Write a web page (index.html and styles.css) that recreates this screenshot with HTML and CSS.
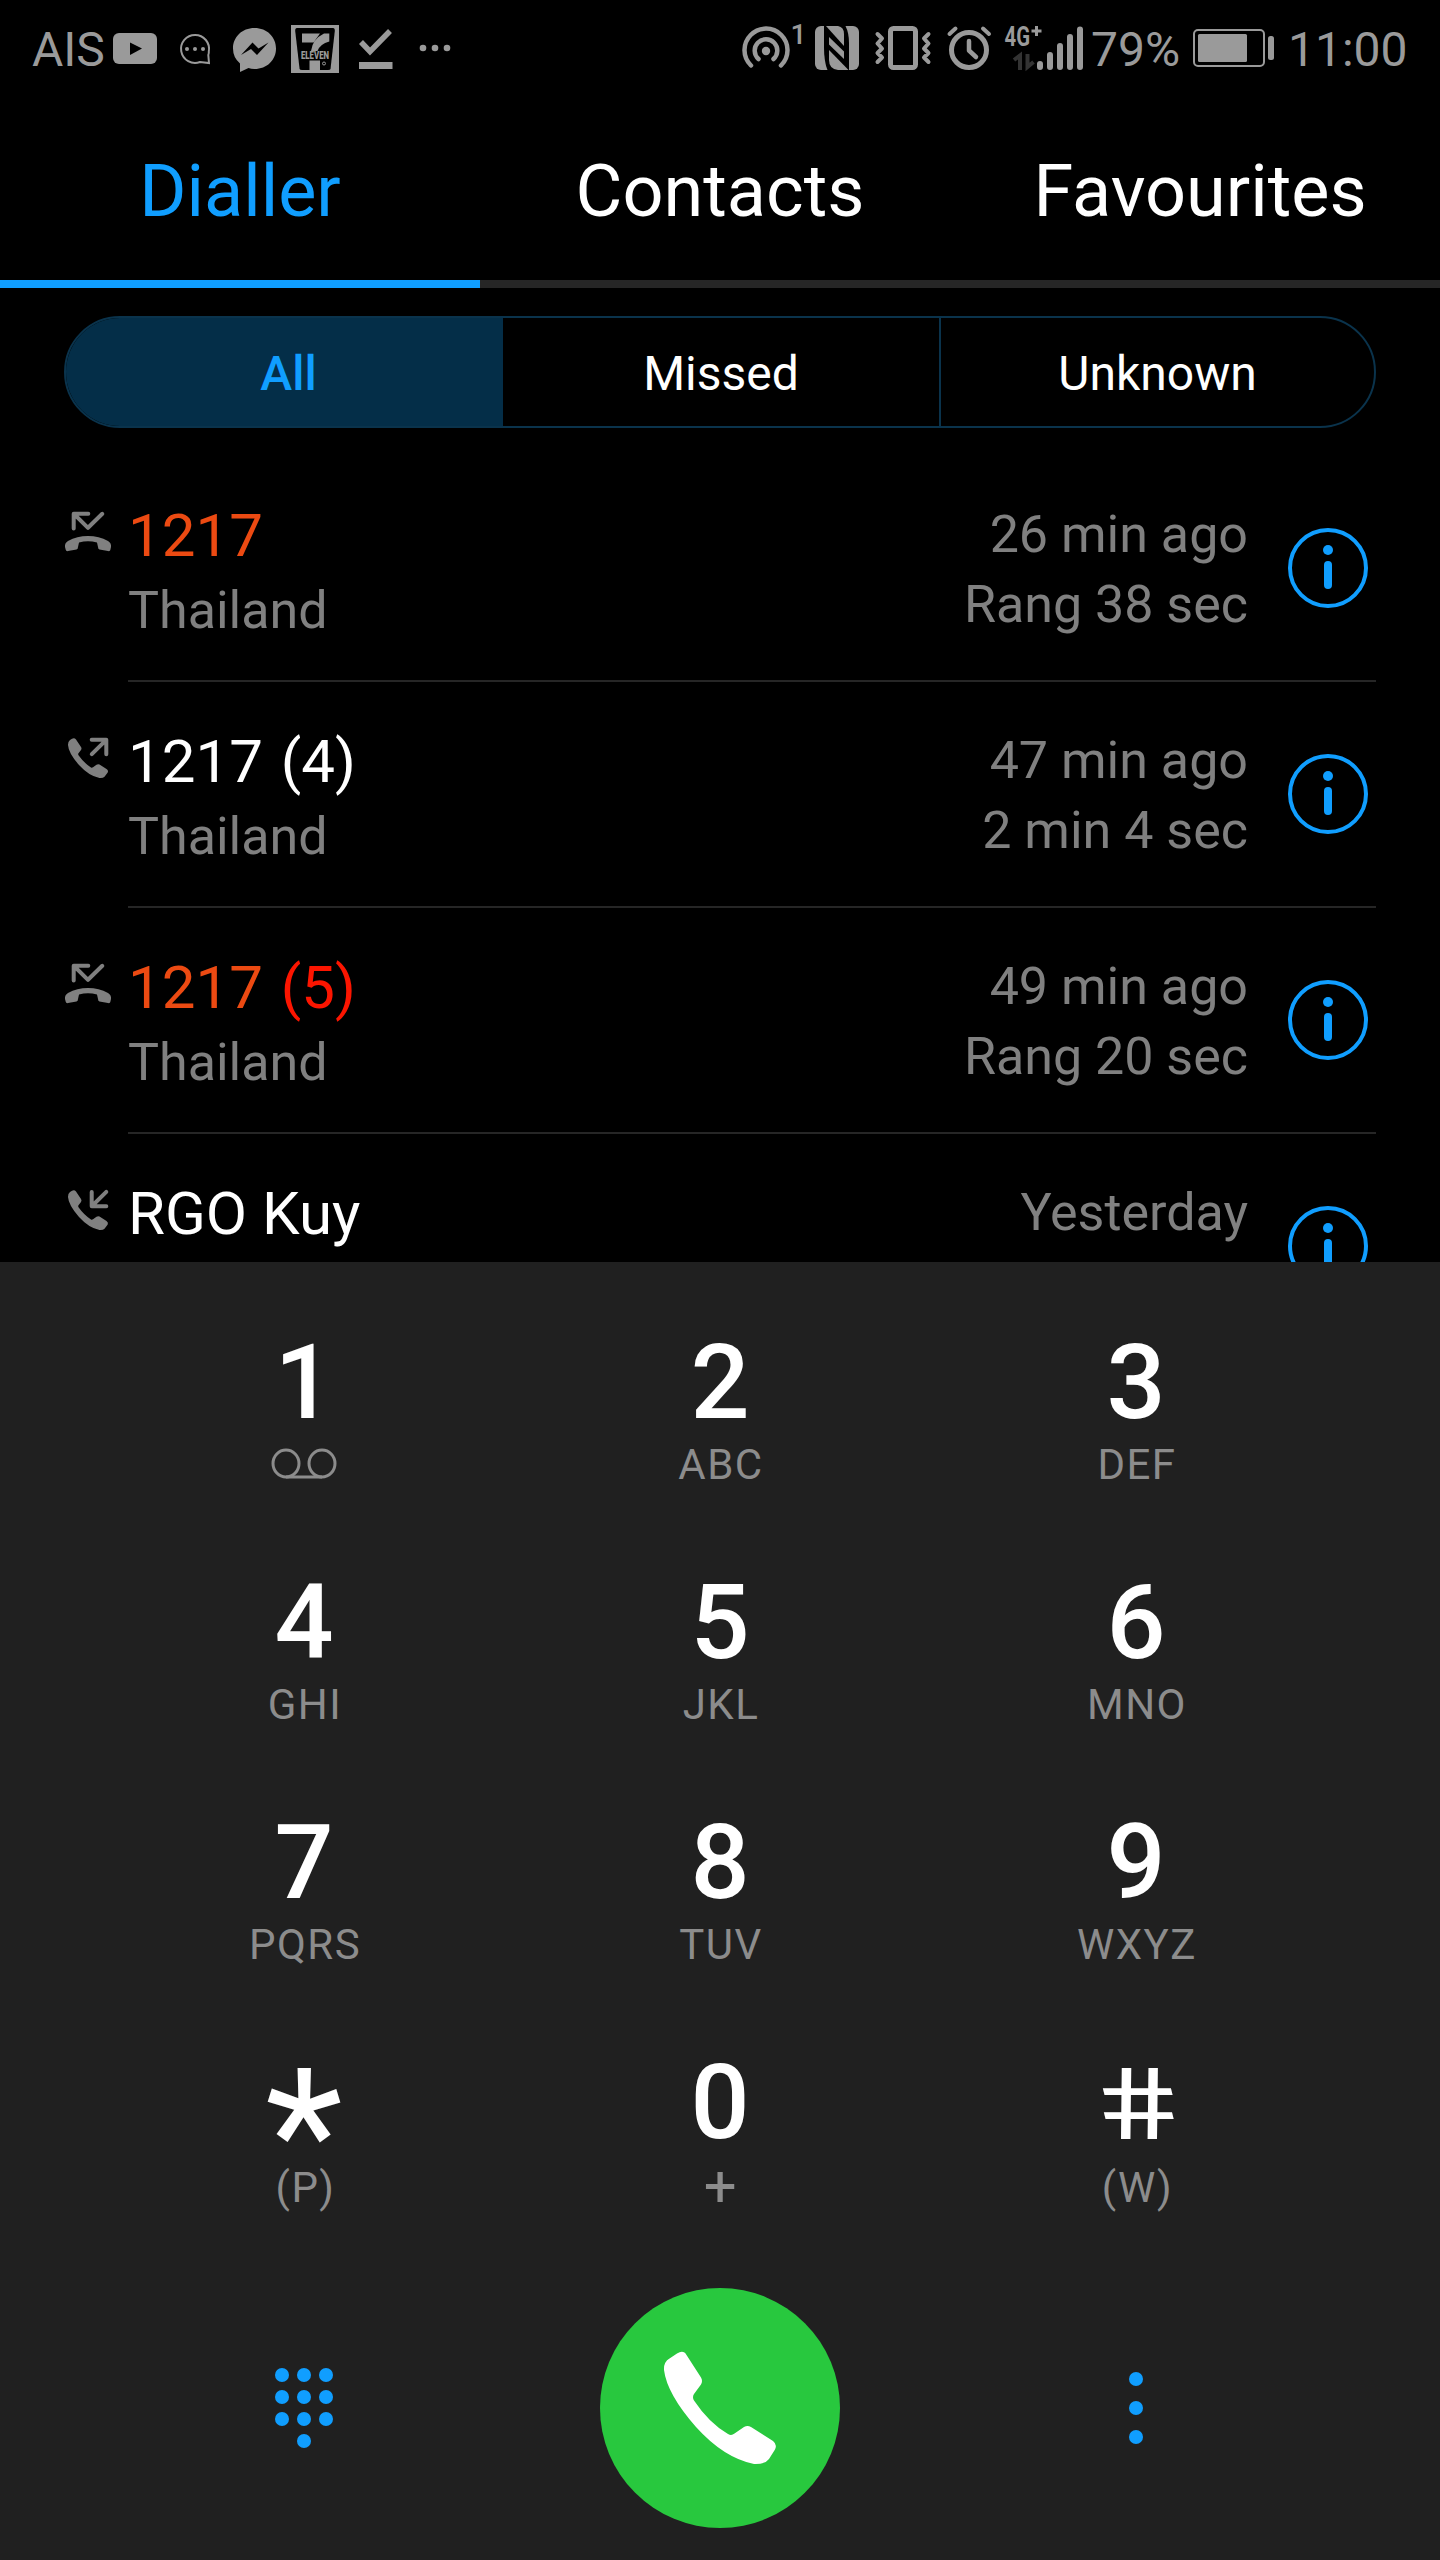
FILE: index.html
```html
<!DOCTYPE html>
<html lang="en">
<head>
    <meta charset="UTF-8">
    <meta name="viewport" content="width=device-width, initial-scale=1.0">
    <title>Dialler</title>
    <link rel="stylesheet" href="styles.css">
</head>
<body>
    <!-- Shared icons -->
    <svg class="icon-defs" width="0" height="0">
        <symbol id="icon-missed" viewBox="64 0 64 100">
            <path class="stroke" d="M88.3 57.8H73.7V72.5M74 58L88 71.8L102.3 57.8"/>
            <path d="M65 91Q64.5 87 68 85Q77 80 88 80Q99 80 108 85Q111.500 87 111 91L110.300 94Q110 95.500 108 95L99.500 93.500Q98 93 98 91L97 86.500Q88 84 79 86.500L78 91Q78 93 76.500 93.500L68 95Q66.200 95.500 65.800 94Z"/>
        </symbol>
        <symbol id="icon-handset" viewBox="64 0 64 100">
            <path d="M72 56.700Q74.500 55.500 76 57.500L81 65Q82 66.500 81 68L78.300 71.500Q78 72.500 78.500 73.300Q84 81 91 85.500Q92 86 93 85.300L96.500 82.800Q98 81.800 99.500 82.600L106.500 87Q108.700 88.500 107.700 90.500L104.500 94.800Q103 96.300 99.500 96Q89 94 79 83Q68.500 71 68 63Q67.900 59.500 70 58Z"/>
        </symbol>
        <symbol id="icon-out" viewBox="64 0 64 100">
            <use href="#icon-handset" x="64" width="64" height="100"/>
            <path class="stroke" d="M91.700 57.800H106.300V72.300M91.800 72.200L105.500 58.600"/>
        </symbol>
        <symbol id="icon-in" viewBox="64 0 64 100">
            <use href="#icon-handset" x="64" width="64" height="100"/>
            <path class="stroke" d="M91.700 58V72.300H106.300M106.300 57.800L92.500 71.500"/>
        </symbol>
        <symbol id="icon-info" viewBox="0 0 80 80">
            <circle class="ring" cx="40" cy="40" r="38"/>
            <circle cx="40" cy="22" r="5"/>
            <rect x="36" y="33" width="8" height="28" rx="4"/>
        </symbol>
    </svg>

    <div class="status-bar">
        <span class="carrier">AIS</span>
        <svg width="64" height="96" viewBox="105 0 64 96">
            <rect x="113" y="33" width="44" height="31" rx="6"/>
            <path class="cut" d="M130 42.500L142 48.500L130 55Z"/>
        </svg>
        <svg width="54" height="96" viewBox="169 0 54 96">
            <path class="line" stroke-width="2" d="M208.800 51.500A14 14 0 1 0 200 62L209 63L208.300 55Q209 53 208.800 51.500Z"/>
            <circle cx="187" cy="49" r="2"/>
            <circle cx="195" cy="49" r="2"/>
            <circle cx="203" cy="49" r="2"/>
        </svg>
        <svg width="62" height="96" viewBox="223 0 62 96">
            <path d="M254.500 28C242 28 233 37 233 48.500Q233 57.500 240 63.500V72L248.500 68Q251 69 254.500 69C267 69 276 60 276 48.500C276 37 267 28 254.500 28Z"/>
            <path class="cut" d="M241 55L252.500 42.500L258.500 48.500L268.500 42.500L257 55L251 49Z"/>
        </svg>
        <svg width="64" height="96" viewBox="285 0 64 96">
            <rect x="291" y="25" width="48" height="48"/>
            <path class="cut" d="M297 28H333Q335 28 334.800 31L330.500 69Q330.300 70 328 70H302Q300 70 299.600 69L295.200 31Q295 28 297 28Z"/>
            <path d="M302 33.500H320L313.500 42.500H302ZM329.300 33.500V41.500Q320 44 317.500 51H311Q312.500 39 324 33.500Z"/>
            <rect x="309.500" y="60.500" width="10.500" height="11"/>
            <text class="eleven" x="301" y="59.300" textLength="28" lengthAdjust="spacingAndGlyphs">ELEVEN</text>
            <circle class="line" stroke-width="1" cx="324" cy="63.500" r="1.500"/>
        </svg>
        <svg width="54" height="96" viewBox="349 0 54 96">
            <path class="line" stroke-width="5.500" d="M361 42L370 51.500L390 31"/>
            <rect x="359" y="62" width="33.500" height="7"/>
        </svg>
        <svg width="60" height="96" viewBox="403 0 60 96">
            <circle cx="423" cy="48" r="3.300"/>
            <circle cx="435" cy="48" r="3.300"/>
            <circle cx="447" cy="48" r="3.300"/>
        </svg>

        <div class="spacer"></div>

        <svg width="69" height="96" viewBox="738 0 69 96">
            <circle cx="766" cy="51" r="4.200"/>
            <path class="line round" stroke-width="4.500" d="M751 65.500A21.500 21.500 0 1 1 781 65.500M758.500 59A11.300 11.300 0 1 1 773.500 59"/>
            <text class="small-one" x="790.500" y="44">1</text>
        </svg>
        <svg width="60" height="96" viewBox="807 0 60 96">
            <rect x="815" y="26" width="44" height="44" rx="6"/>
            <path class="cut" d="M824 26H845.500Q849 33 849 43V70H827.500Q824 62 824 47Z"/>
            <path d="M826 26H838Q844 27 844 34V46Z"/>
            <path d="M829 37L844 51.500V59L829 44.500Z"/>
            <path d="M829 50L848.500 70H838Q829 69 829 60Z"/>
        </svg>
        <svg width="72" height="96" viewBox="867 0 72 96">
            <rect class="line" stroke-width="5" x="890.500" y="28.500" width="25" height="39" rx="3"/>
            <path class="line round" stroke-width="4" d="M877.500 34L882 38.500L877.500 43.500L882 48.500L877.500 53L882 57.500L877.500 62M928.500 34L924 38.500L928.500 43.500L924 48.500L928.500 53L924 57.500L928.500 62"/>
        </svg>
        <svg width="62" height="96" viewBox="939 0 62 96">
            <circle class="line" stroke-width="5" cx="969" cy="50" r="17.500"/>
            <path class="line round" stroke-width="4.500" d="M969 41V50.500L976 57"/>
            <path class="line round" stroke-width="4" d="M949.500 34L955.500 28.500M983 28.500L989 34"/>
        </svg>
        <svg width="90" height="96" viewBox="1001 0 90 96">
            <text class="network" x="1004.500" y="45.500" textLength="25.500" lengthAdjust="spacingAndGlyphs">4G</text>
            <path class="line" stroke-width="3" d="M1031.500 31H1041.500M1036.500 26V36"/>
            <path class="line dim" stroke-width="4" d="M1014 60L1020 55.500V70M1033.500 62L1027.500 67V54"/>
            <path class="line round" stroke-width="6" d="M1040 64V67M1050 55V67M1060 46V67M1070 37V67M1080 29.500V67"/>
        </svg>
        <span class="percent">79%</span>
        <svg width="110" height="96" viewBox="1180 0 110 96">
            <rect class="line" stroke-width="2" x="1194" y="30" width="70" height="36" rx="4"/>
            <rect x="1198" y="34" width="49" height="28" rx="1.500"/>
            <rect x="1268" y="36" width="6" height="24" rx="2.500"/>
        </svg>
        <span class="clock">11:00</span>
    </div>

    <div class="tabs">
        <div class="tab active">Dialler</div>
        <div class="tab">Contacts</div>
        <div class="tab">Favourites</div>
    </div>

    <div class="filters">
        <div class="filter selected">All</div>
        <div class="filter">Missed</div>
        <div class="filter">Unknown</div>
    </div>

    <div class="call-list">
        <div class="call">
            <svg class="call-icon"><use href="#icon-missed"/></svg>
            <div class="call-body">
                <div class="who">
                    <div class="name missed">1217</div>
                    <div class="place">Thailand</div>
                </div>
                <div class="when">26 min ago<br>Rang 38 sec</div>
                <svg class="info"><use href="#icon-info"/></svg>
            </div>
        </div>
        <div class="call">
            <svg class="call-icon"><use href="#icon-out"/></svg>
            <div class="call-body">
                <div class="who">
                    <div class="name">1217 <span class="count">(4)</span></div>
                    <div class="place">Thailand</div>
                </div>
                <div class="when">47 min ago<br>2 min 4 sec</div>
                <svg class="info"><use href="#icon-info"/></svg>
            </div>
        </div>
        <div class="call">
            <svg class="call-icon"><use href="#icon-missed"/></svg>
            <div class="call-body">
                <div class="who">
                    <div class="name missed">1217 <span class="count">(5)</span></div>
                    <div class="place">Thailand</div>
                </div>
                <div class="when">49 min ago<br>Rang 20 sec</div>
                <svg class="info"><use href="#icon-info"/></svg>
            </div>
        </div>
        <div class="call">
            <svg class="call-icon"><use href="#icon-in"/></svg>
            <div class="call-body">
                <div class="who">
                    <div class="name">RGO Kuy</div>
                </div>
                <div class="when">Yesterday</div>
                <svg class="info"><use href="#icon-info"/></svg>
            </div>
        </div>
    </div>

    <div class="dialpad">
        <div class="keys">
            <div class="key">
                <div class="digit">1</div>
                <svg class="voicemail" width="66" height="42" viewBox="0 0 66 42">
                    <ellipse cx="15" cy="20.500" rx="13" ry="13.500"/>
                    <ellipse cx="51" cy="20.500" rx="13" ry="13.500"/>
                    <path d="M15 34H51"/>
                </svg>
            </div>
            <div class="key"><div class="digit">2</div><div class="letters">ABC</div></div>
            <div class="key"><div class="digit">3</div><div class="letters">DEF</div></div>
            <div class="key"><div class="digit">4</div><div class="letters">GHI</div></div>
            <div class="key"><div class="digit">5</div><div class="letters">JKL</div></div>
            <div class="key"><div class="digit">6</div><div class="letters">MNO</div></div>
            <div class="key"><div class="digit">7</div><div class="letters">PQRS</div></div>
            <div class="key"><div class="digit">8</div><div class="letters">TUV</div></div>
            <div class="key"><div class="digit">9</div><div class="letters">WXYZ</div></div>
            <div class="key"><div class="digit star">*</div><div class="letters lower">(P)</div></div>
            <div class="key"><div class="digit">0</div><div class="letters plus">+</div></div>
            <div class="key"><div class="digit hash">#</div><div class="letters lower">(W)</div></div>
        </div>

        <div class="actions">
            <svg class="action" width="60" height="84" viewBox="274 2366 60 84">
                <circle cx="282" cy="2375" r="7"/>
                <circle cx="304" cy="2375" r="7"/>
                <circle cx="326" cy="2375" r="7"/>
                <circle cx="282" cy="2397" r="7"/>
                <circle cx="304" cy="2397" r="7"/>
                <circle cx="326" cy="2397" r="7"/>
                <circle cx="282" cy="2419" r="7"/>
                <circle cx="304" cy="2419" r="7"/>
                <circle cx="326" cy="2419" r="7"/>
                <circle cx="304" cy="2441" r="7"/>
            </svg>
            <div class="call-button">
                <svg width="120" height="120" viewBox="660 2348 120 120">
                    <path d="M677 2353.500Q683.500 2349.500 686.500 2355L701 2377.500Q703 2381 701 2384.500L694 2394Q692 2397 694 2400.500Q709 2423 728 2434Q731.500 2436 734.500 2433.500L744 2427Q747.500 2425 751 2427L773 2441Q777.500 2444.500 775 2449.500L769 2459Q765 2464.500 754 2464Q724 2458 696 2427Q667 2394 664 2370Q663.500 2362 669.500 2358.500Z"/>
                </svg>
            </div>
            <svg class="action" width="20" height="80" viewBox="1126 2368 20 80">
                <circle cx="1136" cy="2379" r="7"/>
                <circle cx="1136" cy="2408" r="7"/>
                <circle cx="1136" cy="2437" r="7"/>
            </svg>
        </div>
    </div>
</body>
</html>
```
FILE: styles.css
```css
body {
    margin: 0;
    padding: 0;
    width: 1440px;
    height: 2560px;
    overflow: hidden;
    background-color: #000;
    color: #fff;
    font-family: Roboto, sans-serif;
}

svg {
    display: block;
    flex-shrink: 0;
}

.icon-defs {
    position: absolute;
}

/* Status bar */
.status-bar {
    display: flex;
    align-items: flex-start;
    height: 96px;
    color: #9a9a9a;
    fill: #9a9a9a;
    font-size: 48px;
    line-height: 99px;
    white-space: nowrap;
}

.status-bar .cut {
    fill: #000;
}

.status-bar .line {
    fill: none;
    stroke: #9a9a9a;
}

.status-bar .round {
    stroke-linecap: round;
    stroke-linejoin: round;
}

.status-bar .dim {
    stroke: #333;
}

.carrier {
    width: 73px;
    padding-left: 32px;
}

.spacer {
    flex: 1;
}

.percent {
    width: 88px;
}

.percent + svg {
    margin-left: 1px;
}

.clock {
    width: 152px;
    margin-left: -2px;
}

.eleven {
    font-size: 10.5px;
    font-weight: 900;
}

.small-one {
    font-size: 28px;
    font-weight: 500;
}

.network {
    font-size: 27px;
    font-weight: 700;
}

/* Tabs */
.tabs {
    display: flex;
    height: 192px;
}

.tab {
    flex: 1;
    box-sizing: border-box;
    border-bottom: 8px solid #262626;
    font-size: 72px;
    line-height: 191px;
    text-align: center;
}

.tab.active {
    border-color: #109eff;
    color: #109eff;
}

/* Call filter */
.filters {
    display: grid;
    grid-template-columns: 437px 436px 1fr;
    box-sizing: border-box;
    height: 112px;
    margin: 28px 64px;
    border: 2px solid #0a334c;
    border-radius: 56px;
    overflow: hidden;
}

.filter {
    font-size: 48px;
    line-height: 112px;
    text-align: center;
}

.filter + .filter + .filter {
    border-left: 2px solid #0a334c;
}

.filter.selected {
    padding-left: 8px;
    background-color: #042e48;
    color: #109eff;
    font-weight: 500;
}

/* Call log */
.call-list {
    height: 806px;
    overflow: hidden;
}

.call {
    display: flex;
    height: 226px;
    padding: 0 64px;
}

.call-icon {
    width: 64px;
    height: 100px;
    fill: #808080;
}

.stroke {
    fill: none;
    stroke: #808080;
    stroke-width: 4;
    stroke-linecap: round;
    stroke-linejoin: round;
}

.call-body {
    display: flex;
    flex: 1;
    box-sizing: border-box;
    border-bottom: 2px solid #262626;
}

.who {
    flex: 1;
    padding-top: 44px;
}

.name {
    font-size: 60px;
    line-height: 71px;
}

.name.missed {
    color: #ec4a12;
}

.count {
    margin-left: 3px;
}

.missed .count {
    color: #fc1500;
}

.place {
    margin-top: 10px;
    color: #808080;
    font-size: 52px;
    line-height: 60px;
}

.when {
    padding-top: 44px;
    color: #808080;
    font-size: 52px;
    line-height: 70px;
    text-align: right;
}

.info {
    width: 80px;
    height: 80px;
    margin: 72px 8px 0 40px;
    fill: #109eff;
}

.ring {
    fill: none;
    stroke: #109eff;
    stroke-width: 4;
}

/* Dial pad */
.dialpad {
    height: 1230px;
    padding-top: 68px;
    background-color: #202020;
}

.keys {
    display: grid;
    grid-template-columns: repeat(3, 416px);
    grid-auto-rows: 240px;
    justify-content: center;
    height: 958px;
}

.key {
    display: flex;
    flex-direction: column;
    align-items: center;
}

.digit {
    height: 104px;
    font-size: 104px;
    font-weight: 500;
    line-height: 105px;
}

.star {
    font-size: 180px;
    font-weight: 400;
    line-height: 170px;
}

.hash {
    margin-right: 3px;
    font-size: 100px;
    font-weight: 400;
    line-height: 109px;
    transform: skewX(14deg) scaleX(1.34);
}

.letters {
    margin-top: 9px;
    padding-left: 2px;
    color: #8c8c8c;
    font-size: 42px;
    line-height: 43px;
    letter-spacing: 1.5px;
}

.letters.lower {
    margin-top: 12px;
    padding-left: 3px;
}

.letters.plus {
    margin-top: 11px;
    font-size: 58px;
}

.voicemail {
    margin-top: 9px;
    fill: none;
    stroke: #8c8c8c;
    stroke-width: 3;
}

.actions {
    display: grid;
    grid-template-columns: repeat(3, 416px);
    justify-content: center;
    justify-items: center;
    align-items: center;
    height: 240px;
}

.action {
    fill: #109eff;
}

.call-button {
    display: flex;
    align-items: center;
    justify-content: center;
    width: 240px;
    height: 240px;
    border-radius: 50%;
    background-color: #28c83e;
    fill: #fff;
}
```
